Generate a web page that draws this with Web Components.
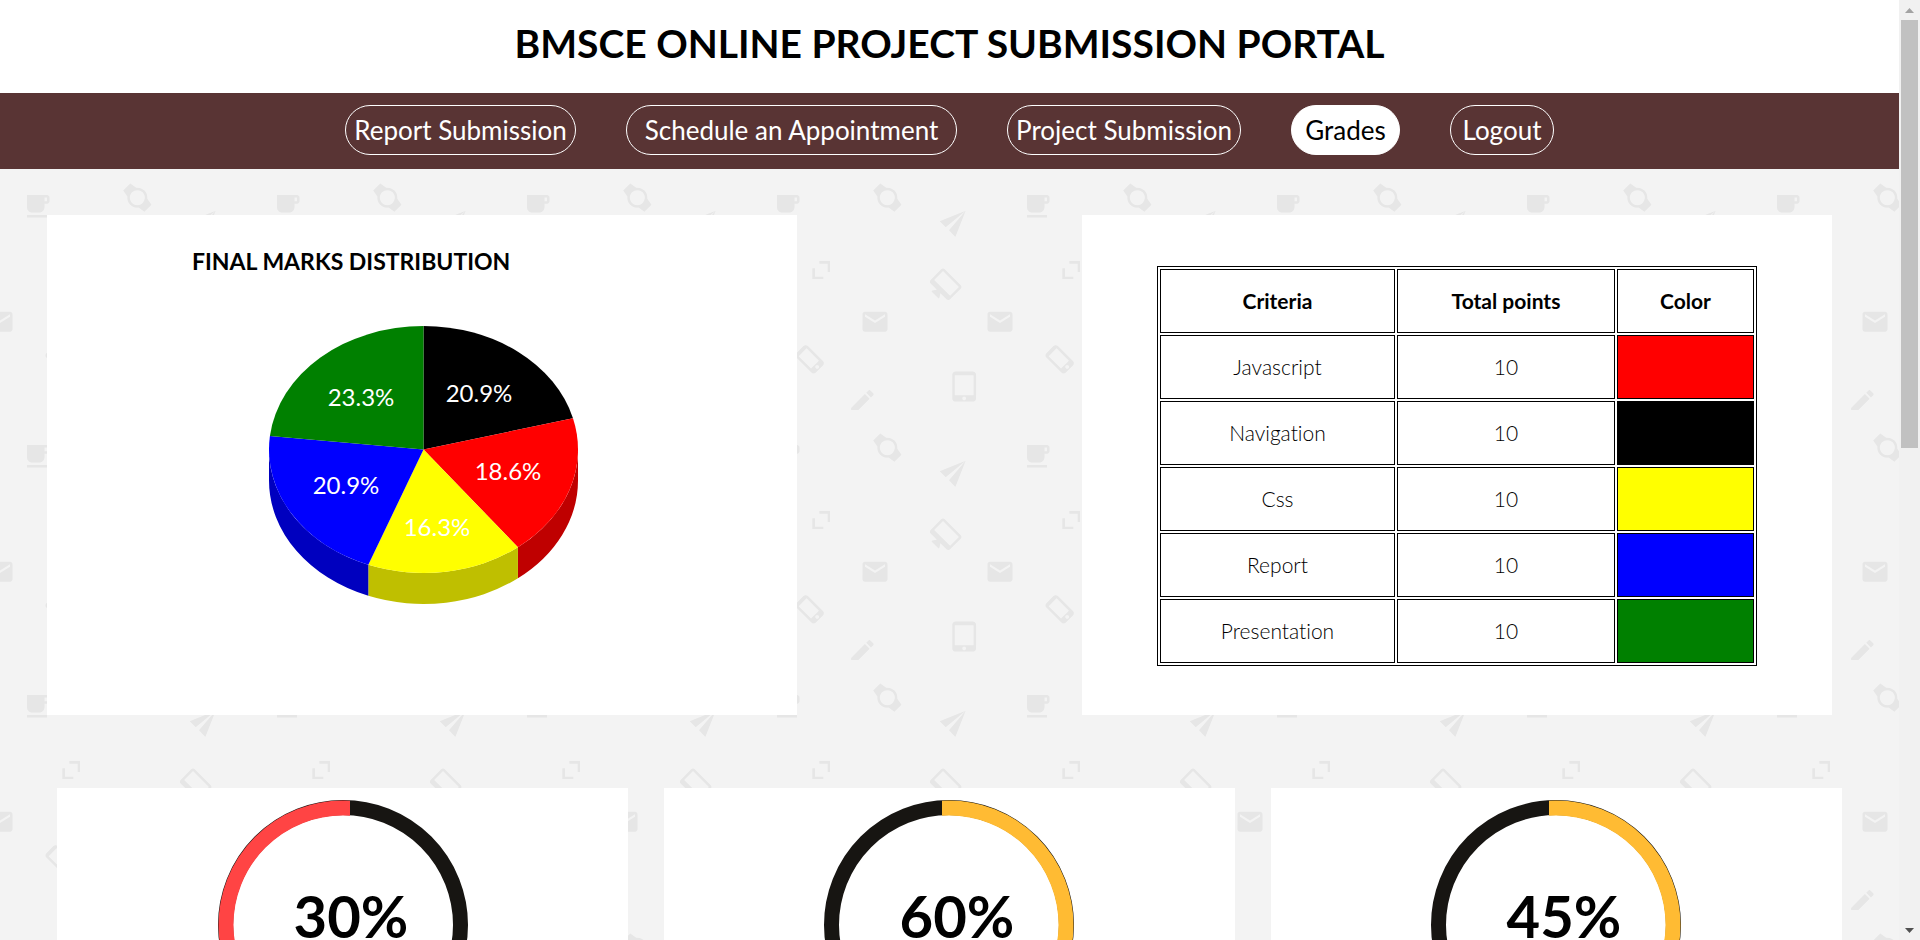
<!DOCTYPE html>
<html lang="en">
<head>
<meta charset="utf-8">
<title>BMSCE Online Project Submission Portal</title>
<style>
  html, body { margin: 0; }
  html { scrollbar-width: none; }
  body { font-family: Lato, "Century Gothic", sans-serif; font-variant-ligatures: none; color: #000; background: #f3f3f3; }
</style>
</head>
<body>
<portal-app>
  <portal-nav slot="nav">
    <nav-pill href="#report">Report Submission</nav-pill>
    <nav-pill href="#appointment">Schedule an Appointment</nav-pill>
    <nav-pill href="#project">Project Submission</nav-pill>
    <nav-pill href="#grades" current>Grades</nav-pill>
    <nav-pill href="#logout">Logout</nav-pill>
  </portal-nav>
  <marks-chart></marks-chart>
  <criteria-table></criteria-table>
  <progress-ring slot="rings" value="30" color="#ff4444" side="left"></progress-ring>
  <progress-ring slot="rings" value="60" color="#ffbb33" side="right"></progress-ring>
  <progress-ring slot="rings" value="45" color="#ffbb33" side="right"></progress-ring>
</portal-app>

<script>
const attach = (el, html) => {
  const root = el.attachShadow({ mode: 'open' });
  root.innerHTML = html;
  return root;
};

/* Tiled icon wallpaper behind the page content */
customElements.define('icon-wallpaper', class extends HTMLElement {
  constructor() {
    super();
    attach(this, `
<style>
  :host { display: block; position: absolute; inset: 0; z-index: -1; }
  svg { display: block; width: 100%; height: 100%; }
</style>
<svg aria-hidden="true">
  <defs>
    <path id="cup" d="M20 3H4v10c0 2.21 1.79 4 4 4h6c2.21 0 4-1.79 4-4v-3h2c1.11 0 2-.9 2-2V5c0-1.11-.89-2-2-2zm0 5h-2V5h2v3zM4 19h16v2H4z"/>
    <path id="mail" d="M20 4H4c-1.1 0-1.99.9-1.99 2L2 18c0 1.1.9 2 2 2h16c1.1 0 2-.9 2-2V6c0-1.1-.9-2-2-2zm0 4l-8 5-8-5V6l8 5 8-5v2z"/>
    <pattern id="tile" patternUnits="userSpaceOnUse" x="40" y="160" width="250" height="250" viewBox="0 0 750 750">
      <g fill="#e6e6e6">
        <use href="#mail" transform="translate(255 485) scale(3.75) translate(-12 -12)"/>
        <use href="#mail" transform="translate(630 485) scale(3.75) translate(-12 -12)"/>
        <use href="#cup" transform="translate(696 94) scale(3.75)"/>
        <use href="#cup" transform="translate(-54 94) scale(3.75)"/>
        <path transform="translate(292 113) rotate(-45) scale(3.75) translate(-12 -12)" d="M20 12c0-2.54-1.19-4.81-3.04-6.27L16 0H8l-.95 5.73C5.19 7.19 4 9.45 4 12s1.19 4.81 3.05 6.27L8 24h8l.96-5.73C18.81 16.81 20 14.54 20 12zM6 12c0-3.31 2.69-6 6-6s6 2.69 6 6-2.69 6-6 6-6-2.69-6-6z"/>
        <path d="M449 184L527 152L467 202ZM527 152L496 231L477 211Z"/>
        <path d="M88 303h32v33h-7v-25h-25zM67 325v32h33v-7h-25v-25z"/>
        <path transform="translate(467 373) rotate(45) scale(3.75) translate(-12 -10)" d="M21 2H3c-1.1 0-2 .9-2 2v12c0 1.1.9 2 2 2h7l-2 3v1h8v-1l-2-3h7c1.1 0 2-.9 2-2V4c0-1.1-.9-2-2-2zm0 12H3V4h18v10z"/>
        <path transform="translate(59 598) rotate(-45) scale(3.75) translate(-11.5 -12)" d="M15.5 1h-8C6.12 1 5 2.12 5 3.5v17C5 21.88 6.12 23 7.5 23h8c1.38 0 2.5-1.12 2.5-2.5v-17C18 2.12 16.88 1 15.5 1zm-4 21c-.83 0-1.5-.67-1.5-1.5s.67-1.5 1.5-1.5 1.5.67 1.5 1.5-.67 1.5-1.5 1.5zm4.5-4H7V4h9v14z"/>
        <path transform="translate(522.5 679.5) scale(3.75) translate(-11.5 -12)" d="M18.5 0h-14C3.12 0 2 1.12 2 2.5v19C2 22.88 3.12 24 4.5 24h14c1.38 0 2.5-1.12 2.5-2.5v-19C21 1.12 19.88 0 18.5 0zm-7 23c-.83 0-1.5-.67-1.5-1.5s.67-1.5 1.5-1.5 1.5.67 1.5 1.5-.67 1.5-1.5 1.5zm7.5-4H4V3h15v16z"/>
        <path transform="translate(172 679) scale(3.75)" d="M3 17.25V21h3.75L17.81 9.94l-3.75-3.75L3 17.25zM20.71 7.04c.39-.39.39-1.02 0-1.41l-2.34-2.34c-.39-.39-1.02-.39-1.41 0l-1.83 1.83 3.75 3.75 1.83-1.83z"/>
      </g>
    </pattern>
  </defs>
  <rect width="100%" height="100%" fill="url(#tile)"/>
</svg>`);
  }
});

/* Scroll bar at the right edge of the window */
customElements.define('page-scrollbar', class extends HTMLElement {
  constructor() {
    super();
    attach(this, `
<style>
  :host { display: grid; grid-template-rows: 20px 1fr 20px; background: #f1f1f1; padding: 0 2px; box-sizing: border-box;
          position: sticky; top: 0; height: 100vh; }
  .track { min-height: 0; }
  .thumb { height: 475%; max-height: 428px; background: #c1c1c1; }
  svg { display: block; margin: auto; }
</style>
<svg width="9" height="5" aria-hidden="true"><path d="M0 5L4.5 0L9 5Z" fill="#a3a3a3"/></svg>
<div class="track"><div class="thumb"></div></div>
<svg width="9" height="5" aria-hidden="true"><path d="M0 0L4.5 5L9 0Z" fill="#505050"/></svg>`);
  }
});

customElements.define('nav-pill', class extends HTMLElement {
  constructor() {
    super();
    attach(this, `
<style>
  :host { display: block; }
  a { display: block; box-sizing: border-box; height: 50px; line-height: 48px; border: 1px solid #fff; border-radius: 25px;
      color: #fff; text-align: center; text-decoration: none; white-space: nowrap; font-size: 26px; }
  :host([current]) a { background: #fff; color: #000; }
</style>
<a href="${this.getAttribute('href')}"><slot></slot></a>`);
    if (this.hasAttribute('current')) this.shadowRoot.querySelector('a').setAttribute('aria-current', 'page');
  }
});

customElements.define('portal-nav', class extends HTMLElement {
  constructor() {
    super();
    attach(this, `
<style>
  :host { display: block; background: #593434; padding: 12px 0 14px; }
  nav { display: grid; grid-template-columns: 231px 331px 234px 109px 104px; gap: 50px; justify-content: center; }
</style>
<nav><slot></slot></nav>`);
  }
});

/* 3D pie: top ellipse with slices, extruded downwards on the front side */
customElements.define('marks-chart', class extends HTMLElement {
  constructor() {
    super();
    const cx = 154.5, cy = 123.5, rx = 154.5, ry = 123.5, depth = 31;
    const slices = [
      { n: 9, c: '#000000', label: '20.9%', x: 210, y: 76 },
      { n: 8, c: '#ff0000', side: '#bf0000', label: '18.6%', x: 239, y: 154 },
      { n: 7, c: '#ffff00', side: '#bfbf00', label: '16.3%', x: 168, y: 210 },
      { n: 9, c: '#0000ff', side: '#0000bf', label: '20.9%', x: 77, y: 168 },
      { n: 10, c: '#008000', label: '23.3%', x: 92, y: 80 }
    ];
    const pt = a => [cx + rx * Math.sin(a), cy - ry * Math.cos(a)];
    let a = 0, tops = '', sides = '', labels = '';
    for (const s of slices) {
      const b = a + s.n / 43 * 2 * Math.PI;
      const [x1, y1] = pt(a), [x2, y2] = pt(b);
      tops += `<path fill="${s.c}" d="M${cx} ${cy}L${x1} ${y1}A${rx} ${ry} 0 0 1 ${x2} ${y2}Z"/>`;
      if (s.side) {
        const [u, v] = pt(Math.max(a, Math.PI / 2)), [p, q] = pt(Math.min(b, Math.PI * 1.5));
        sides += `<path fill="${s.side}" d="M${u} ${v}A${rx} ${ry} 0 0 1 ${p} ${q}v${depth}A${rx} ${ry} 0 0 0 ${u} ${v + depth}Z"/>`;
      }
      labels += `<text x="${s.x}" y="${s.y}">${s.label}</text>`;
      a = b;
    }
    attach(this, `
<style>
  :host { display: block; box-sizing: border-box; width: 750px; height: 500px; background: #fff; padding: 32px 0 0 145px; }
  h2 { margin: 0 0 51px; font-size: 23px; line-height: 28px; font-weight: 700; }
  svg { display: block; margin-left: 77px; }
  text { fill: #fff; font-size: 24px; text-anchor: middle; }
</style>
<h2>FINAL MARKS DISTRIBUTION</h2>
<svg width="310" height="280" viewBox="0 0 310 280" role="img" aria-label="Final marks distribution">${sides}${tops}${labels}</svg>`);
  }
});

customElements.define('criteria-table', class extends HTMLElement {
  constructor() {
    super();
    const rows = [['Javascript', 'red'], ['Navigation', 'black'], ['Css', 'yellow'], ['Report', 'blue'], ['Presentation', 'green']]
      .map(([n, c]) => `<tr><td>${n}</td><td>10</td><td style="background:${c}"></td></tr>`).join('');
    attach(this, `
<style>
  :host { display: block; box-sizing: border-box; width: 750px; height: 500px; background: #fff; padding: 51px 75px 49px; }
  table { width: 100%; table-layout: fixed; border: 1px solid #000; border-spacing: 2px; border-collapse: separate; }
  th, td { box-sizing: border-box; height: 64px; border: 1px solid #000; padding: 0; text-align: center; font-size: 21px; line-height: 26px; }
  td { font-weight: 300; }
  col:nth-child(1) { width: 235px; }
  col:nth-child(2) { width: 218px; }
</style>
<table>
  <colgroup><col><col><col></colgroup>
  <thead><tr><th scope="col">Criteria</th><th scope="col">Total points</th><th scope="col">Color</th></tr></thead>
  <tbody>${rows}</tbody>
</table>`);
  }
});

/* Two-tone ring with its percentage in the middle */
customElements.define('progress-ring', class extends HTMLElement {
  constructor() {
    super();
    const left = this.getAttribute('side') === 'left';
    const clip = left ? '<rect width="132" height="250"/>' : '<rect x="118" width="132" height="250"/>';
    attach(this, `
<style>
  :host { display: block; background: #fff; padding: 12px 0; }
  svg { display: block; margin: 0 auto; }
  text { font-size: 58px; font-weight: 700; text-anchor: middle; }
</style>
<svg width="250" height="250" viewBox="0 0 250 250" role="img" aria-label="${this.getAttribute('value')} percent">
  <clipPath id="half">${clip}</clipPath>
  <circle cx="125" cy="125" r="117.5" fill="none" stroke="#171512" stroke-width="15"/>
  <circle cx="125" cy="125" r="117" fill="none" stroke="${this.getAttribute('color')}" stroke-width="15" clip-path="url(#half)"/>
  <text x="133" y="138">${this.getAttribute('value')}%</text>
</svg>`);
  }
});

customElements.define('portal-app', class extends HTMLElement {
  constructor() {
    super();
    attach(this, `
<style>
  :host { display: grid; grid-template-columns: 1fr 21px; align-items: start; }
  .page { position: relative; z-index: 0; min-width: 0; }
  header { background: #fff; padding: 19px 0 26px; }
  h1 { margin: 0; font-size: 39px; line-height: 48px; font-weight: 700; text-align: center; white-space: nowrap; }
  .top { display: flex; justify-content: space-between; padding: 46px 67px 0 47px; }
  .rings { display: grid; grid-template-columns: repeat(3, 1fr); column-gap: 2%; padding: 73px 3% 60px; }
</style>
<div class="page">
  <icon-wallpaper></icon-wallpaper>
  <header><h1>BMSCE ONLINE PROJECT SUBMISSION PORTAL</h1></header>
  <slot name="nav"></slot>
  <main>
    <section class="top"><slot></slot></section>
    <section class="rings"><slot name="rings"></slot></section>
  </main>
</div>
<page-scrollbar></page-scrollbar>`);
  }
});
</script>
</body>
</html>
